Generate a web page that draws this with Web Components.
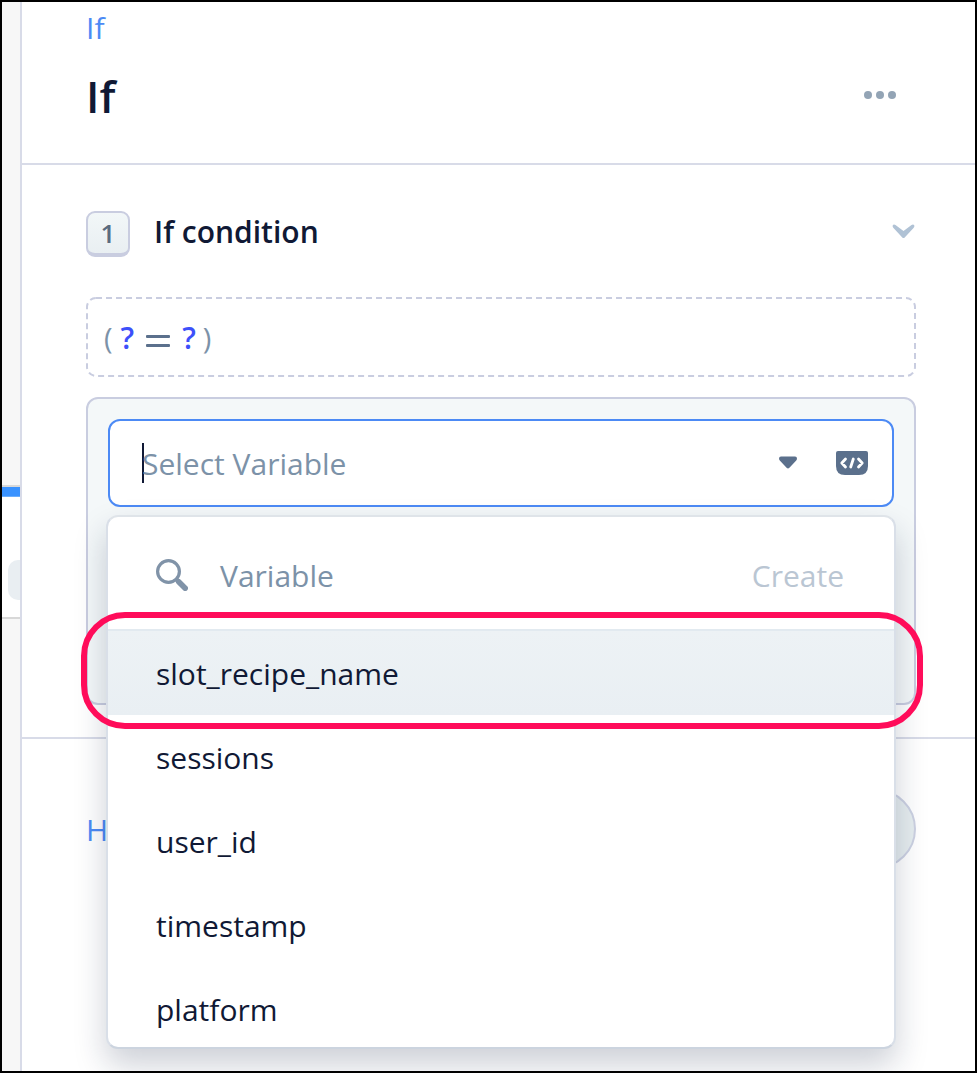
<!DOCTYPE html>
<html lang="en">
<head>
<meta charset="utf-8">
<title>If</title>
<style>
html,body{margin:0;height:100%}
body{font-family:"Open Sans",sans-serif;font-size:30px;line-height:40px;color:#101935;background:#fff;overflow:hidden}
</style>
</head>
<body>
<app-frame>
  <canvas-strip slot="canvas"></canvas-strip>
  <panel-header crumb="If" heading="If"></panel-header>
  <condition-section step="1" heading="If condition">
    <condition-formula slot="formula"></condition-formula>
    <variable-select slot="editor" placeholder="Select Variable">
      <variable-menu slot="menu">
        <menu-item active>slot_recipe_name</menu-item>
        <menu-item>sessions</menu-item>
        <menu-item>user_id</menu-item>
        <menu-item>timestamp</menu-item>
        <menu-item>platform</menu-item>
      </variable-menu>
    </variable-select>
  </condition-section>
  <panel-footer></panel-footer>
</app-frame>
<script>
const define = (name, html) => customElements.define(name, class extends HTMLElement {
  constructor() {
    super();
    this.attachShadow({ mode: 'open' }).innerHTML = '<style>*{box-sizing:border-box}</style>' + html;
  }
  connectedCallback() {
    this.shadowRoot.querySelectorAll('[data-attr]').forEach(n => {
      n.textContent = this.getAttribute(n.dataset.attr);
    });
  }
});

define('app-frame', `<style>
:host{display:flex;box-sizing:border-box;width:977px;height:1073px;border:2px solid #000;overflow:hidden}
main{flex:1;display:flex;flex-direction:column;border-left:2px solid #d8dbe8;background:#fff}
</style><slot name="canvas"></slot><main><slot></slot></main>`);

define('canvas-strip', `<style>
:host{display:flex;flex-direction:column;width:18px;background:#f7f7f7;overflow:hidden}
.node{margin-top:483px;height:134px;border-top:2px solid #d8d8d8;border-bottom:2px solid #d8d8d8;background:#fff}
.bar{height:10px;background:#3992ff;border-bottom:1px solid #6aadfd}
.port{margin:63px 0 0 6px;width:40px;height:40px;border-radius:10px;background:#e9eef2}
</style><div class="node"><div class="bar"></div><div class="port"></div></div>`);

define('panel-header', `<style>
:host{display:flex;justify-content:space-between;box-sizing:border-box;height:163px;padding:6px 79px 0 64px;border-bottom:2px solid #d8dbe8}
.crumb{color:#4c8af5}
h1{margin:18px 0 0;font-size:44px;line-height:60px;font-weight:600}
svg{display:block;margin-top:83px}
</style><div><div class="crumb" data-attr="crumb"></div><h1 data-attr="heading"></h1></div>
<svg width="32" height="8" fill="#93a4b5"><circle cx="4" cy="4" r="4"/><circle cx="16" cy="4" r="4"/><circle cx="28" cy="4" r="4"/></svg>`);

define('condition-section', `<style>
:host{display:block;box-sizing:border-box;height:574px;padding:46px 59px 0 64px;border-bottom:2px solid #d8dbe8}
header{display:flex;align-items:center;height:46px}
.step{width:44px;height:46px;border:2px solid #c9cde0;border-bottom-width:4px;border-radius:9px;background:linear-gradient(#f2f7f8,#e9eff2);color:#5a6b80;font-size:26px;font-weight:600;line-height:40px;text-align:center}
h2{flex:1;margin:0 0 4px 24px;font-size:30px;line-height:40px;font-weight:600}
header svg{display:block;margin:-6px 0 0}
slot{display:block}
.formula{margin-top:40px}
.editor{margin-top:20px;height:308px;border:2px solid #c9cde0;border-radius:12px;background:#f4f8f9;padding:20px}
</style><header><div class="step" data-attr="step"></div><h2 data-attr="heading"></h2>
<svg width="24" height="15" viewBox="0 0 24 15"><path d="M.7 1.5Q1.5-.1 3.5 1L11.5 7 19.5 1Q21.5-.1 22.3 1.5 22.7 2.6 21.5 4L12.7 13.4Q11.5 14.6 10.3 13.4L1.5 4Q.3 2.6 .7 1.5Z" fill="#b0c2d5"/></svg></header>
<div class="formula"><slot name="formula"></slot></div>
<div class="editor"><slot name="editor"></slot></div>`);

define('condition-formula', `<style>
:host{display:flex;align-items:center;height:80px;box-sizing:border-box;padding:1px 0 0 18px;color:#7c92a8;position:relative}
.edge{position:absolute;left:0;top:0}
b{font-weight:600;color:#3d50fa}
span,b{line-height:40px}
span{font-size:29px}
.eq{display:block;margin:7px 12px 0 12px}
</style><svg class="edge" width="830" height="80"><rect x="1" y="1" width="828" height="78" rx="9" fill="none" stroke="#c9cde0" stroke-width="2" stroke-dasharray="6 4"/></svg>
<span>(</span><b style="margin-left:8px">?</b><svg class="eq" width="24" height="13" fill="#5b708c"><rect width="24" height="3" rx="1"/><rect y="9" width="24" height="3" rx="1"/></svg><b>?</b><span style="margin-left:7px">)</span>`);

define('variable-select', `<style>
:host{display:block;position:relative}
.field{display:flex;align-items:center;height:88px;width:786px;border:2px solid #4c8af5;border-radius:12px;background:#fff;padding:0 24px 0 32px}
.caret{width:2px;height:40px;background:#101935;margin-right:-2px}
.ph{flex:1;padding-top:2px;color:#7c92a8}
svg{display:block}
::slotted(variable-menu){position:absolute;left:-2px;top:96px;z-index:2}
</style><div class="field"><i class="caret"></i><span class="ph" data-attr="placeholder"></span>
<svg width="18" height="13" viewBox="0 0 18 13" style="margin:-1px 39px 0 0"><path d="M2 .5H16Q18 .5 18 2.4 18 3.6 17 4.7L10.4 11.8Q9 13.2 7.6 11.8L1 4.7Q0 3.6 0 2.4 0 .5 2 .5Z" fill="#5b708c"/></svg>
<svg width="32" height="24" viewBox="0 0 32 24"><path d="M2 0H30Q32 0 32 2V15Q32 24 23 24H9Q0 24 0 15V2Q0 0 2 0Z" fill="#5b708c"/><path d="M9.5 8 5.8 12 9.5 16M22.5 8 26.2 12 22.5 16M17.3 8 14.7 16" fill="none" stroke="#fff" stroke-width="2.8" stroke-linecap="round" stroke-linejoin="round"/></svg></div><slot name="menu"></slot>`);

define('variable-menu', `<style>
:host{display:block;box-sizing:border-box;width:790px;height:534px;border:2px solid #d9dfe8;border-top-color:#dfe4e9;border-bottom-color:#ccd4df;border-radius:12px;background:#fff;box-shadow:0 16px 32px rgba(19,33,68,.21)}
.search{display:flex;align-items:center;height:114px;padding:6px 50px 0 48px;border-bottom:2px solid #e2eaf0;color:#7c92a8}
.search svg{display:block;margin:-2px 32px 0 0}
.name{flex:1}
.create{color:#bac6d3}
.ring{position:absolute;left:-27px;top:95px;width:842px;height:117px;border:6px solid #ff0c5a;border-radius:44px;z-index:3}
</style><div class="search"><svg width="32" height="32" viewBox="0 0 32 32" fill="none" stroke="#8093a8"><circle cx="12.5" cy="12.5" r="10.9" stroke-width="3.2"/><path d="M20.5 20.5 22.5 22.5" stroke-width="4"/><path d="M22.7 22.7 29.2 29.2" stroke-width="5.6" stroke-linecap="round"/></svg><span class="name">Variable</span><span class="create">Create</span></div>
<slot></slot><div class="ring"></div>`);

define('menu-item', `<style>
:host{display:flex;align-items:center;box-sizing:border-box;height:84px;padding:2px 0 0 48px}
:host([active]){background:linear-gradient(#edf2f5,#e9eff3)}
</style><slot></slot>`);

define('panel-footer', `<style>
:host{display:flex;align-items:center;justify-content:space-between;padding:50px 59px 0 64px}
.help{padding-top:2px;color:#4c8af5}
.pill{width:200px;height:80px;border:2px solid #ccd1e2;border-radius:40px;background:#e6edef}
</style><span class="help">H</span><div class="pill"></div>`);
</script>
</body>
</html>
